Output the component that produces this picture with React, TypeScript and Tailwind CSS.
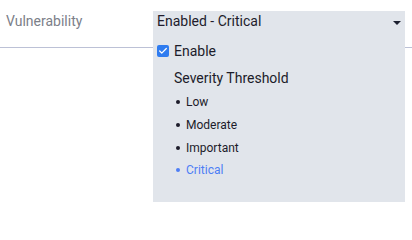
import { Check } from "lucide-react";

const levels = ["Low", "Moderate", "Important", "Critical"];

function App() {
  return (
    <div className="relative w-[412px] h-[211px] bg-white font-['Roboto',sans-serif] overflow-hidden">
      {/* form row */}
      <div className="h-[48px] border-b border-[#bcc1d6] flex items-start">
        <label className="pl-[6px] pt-[11px] text-[14px] leading-[20px] text-[#7c8089]">
          Vulnerability
        </label>
      </div>

      {/* open dropdown */}
      <div className="absolute left-[153px] top-[11px] w-[252px] h-[191px] bg-[#e1e5eb]">
        <button className="w-full h-[20px] flex items-center justify-between pl-[4px] pr-[4px] text-[14px] leading-[20px] text-[#221c2c]">
          <span>Enabled - Critical</span>
          <svg width="8" height="4" viewBox="0 0 8 4" className="mt-[3px]">
            <path d="M0 0h8L4 4z" fill="#1c2030" />
          </svg>
        </button>

        <div className="flex items-center gap-[5px] pl-[4px] mt-[10px] h-[20px]">
          <span className="w-[12px] h-[12px] rounded-[2px] bg-[#2f7cf0] flex items-center justify-center">
            <Check className="w-[10px] h-[10px] text-white" strokeWidth={3} />
          </span>
          <span className="text-[14px] leading-[20px] text-[#1c1c2a]">Enable</span>
        </div>

        <div className="pl-[21px] mt-[7px] text-[14px] leading-[20px] text-[#1c1c2a]">
          Severity Threshold
        </div>

        <ul className="pl-[23px] mt-[3px]">
          {levels.map((l) => (
            <li
              key={l}
              className={
                l === "Critical"
                  ? "h-[22.7px] flex items-center gap-[6px] text-[12px] text-[#4d7ef5]"
                  : "h-[22.7px] flex items-center gap-[6px] text-[12px] text-[#1c1c2a]"
              }
            >
              <span className="w-[4px] h-[4px] rounded-full bg-current" />
              {l}
            </li>
          ))}
        </ul>
      </div>
    </div>
  );
}

export default App;
